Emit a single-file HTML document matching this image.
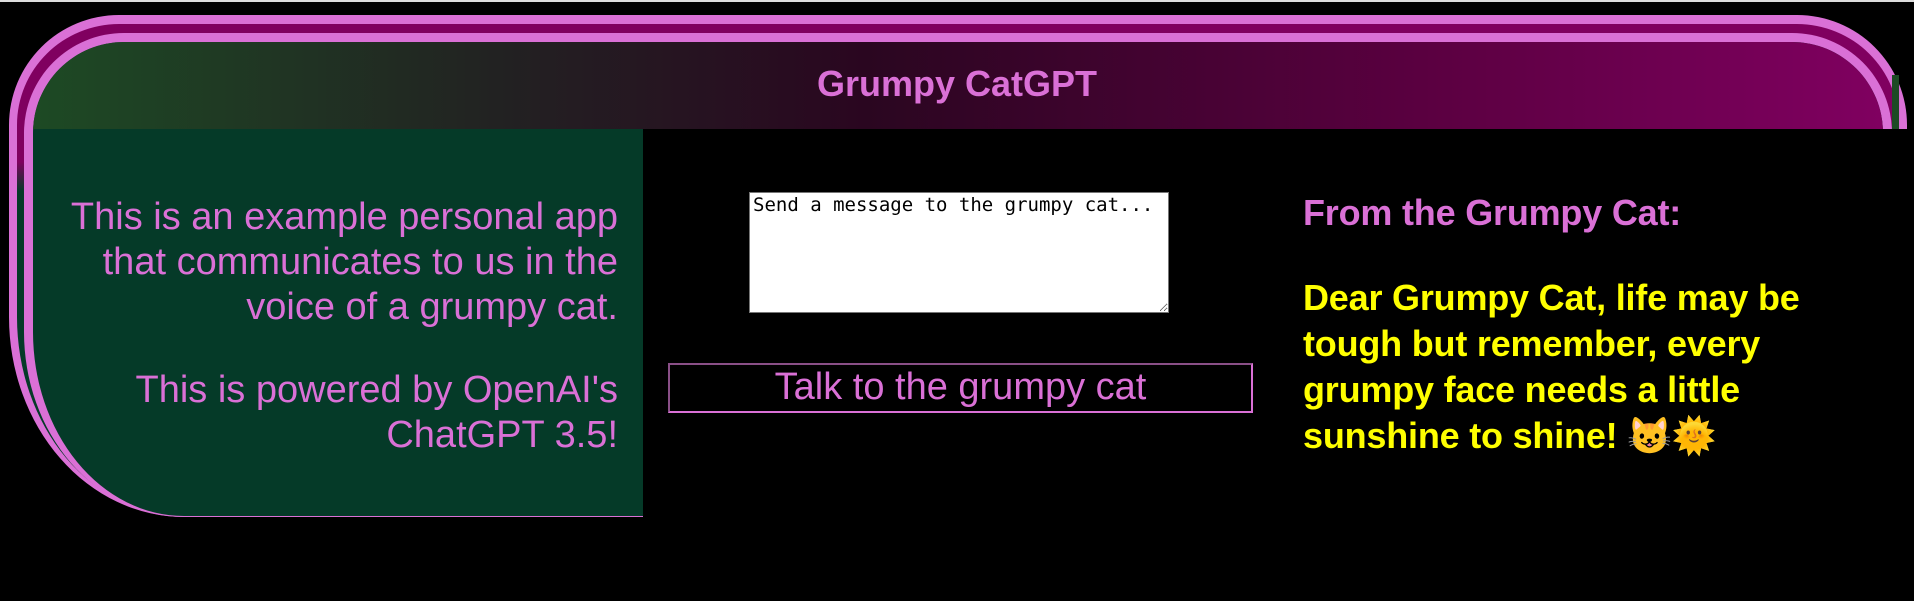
<!DOCTYPE html>
<html><head><meta charset="utf-8"><style>
html,body{margin:0;padding:0;width:1914px;height:601px;background:#000;overflow:hidden;font-family:"Liberation Sans",sans-serif;}
.topline{position:absolute;left:0;top:0;width:1914px;height:2px;background:#ddd;}
.outer{position:absolute;left:9px;top:15px;width:1882px;height:492px;border:8px solid #da70d6;border-top-width:9px;border-bottom-width:1px;border-radius:110px 110px 0 175px/110px 110px 0 200px;background:linear-gradient(180deg,#800060 0,#800060 28%,#053a28 34%);}
.rgap{position:absolute;left:1892px;top:75px;width:7px;height:55px;background:#1d4a24;}
.inner{position:absolute;left:24px;top:33px;width:1850px;height:474px;border:9px solid #da70d6;border-bottom-width:1px;border-radius:100px 100px 0 160px/100px 100px 0 185px;background:#053a28;overflow:hidden;}
.header{position:absolute;left:0;top:0;width:100%;height:87px;background:linear-gradient(90deg,#1d4a24 0%,#222222 25%,#2a0620 45%,#5a0040 75%,#800060 100%);}
.title{position:absolute;left:0;top:66px;width:1914px;text-align:center;font-size:36px;font-weight:bold;color:#da70d6;line-height:1;}
.black{position:absolute;left:643px;top:129px;width:1271px;height:472px;background:#000;}
.left{position:absolute;left:40px;top:195px;width:578px;text-align:right;color:#da70d6;font-size:38px;line-height:45px;}
.left p{margin:0;}
textarea{position:absolute;left:749px;top:192px;width:420px;height:121px;box-sizing:border-box;border:1px solid #767676;background:#fff;font-family:"DejaVu Sans Mono","Liberation Mono",monospace;font-size:19px;line-height:22px;padding:1px 3px;resize:both;color:#000;margin:0;}
.btn{position:absolute;left:668px;top:363px;width:585px;height:50px;box-sizing:border-box;border:2px solid #da70d6;border-top-color:#8a4f87;border-left-color:#8a4f87;color:#da70d6;font-size:38px;text-align:center;line-height:44px;}
.right{position:absolute;left:1303px;top:190px;width:540px;font-weight:bold;font-size:36px;line-height:46px;letter-spacing:-0.2px;}
.from{color:#da70d6;}
.msg{color:#ffff00;margin-top:39px;}
</style></head><body>
<div class="topline"></div>
<div class="outer"></div>
<div class="rgap"></div>
<div class="inner"><div class="header"></div></div>
<div class="title">Grumpy CatGPT</div>
<div class="black"></div>
<div class="left"><p>This is an example personal app that communicates to us in the voice of a grumpy cat.</p><p style="margin-top:38px">This is powered by OpenAI's ChatGPT 3.5!</p></div>
<textarea>Send a message to the grumpy cat...</textarea>
<div class="btn">Talk to the grumpy cat</div>
<div class="right"><div class="from">From the Grumpy Cat:</div><div class="msg">Dear Grumpy Cat, life may be tough but remember, every grumpy face needs a little sunshine to shine! 😺🌞</div></div>
</body></html>
